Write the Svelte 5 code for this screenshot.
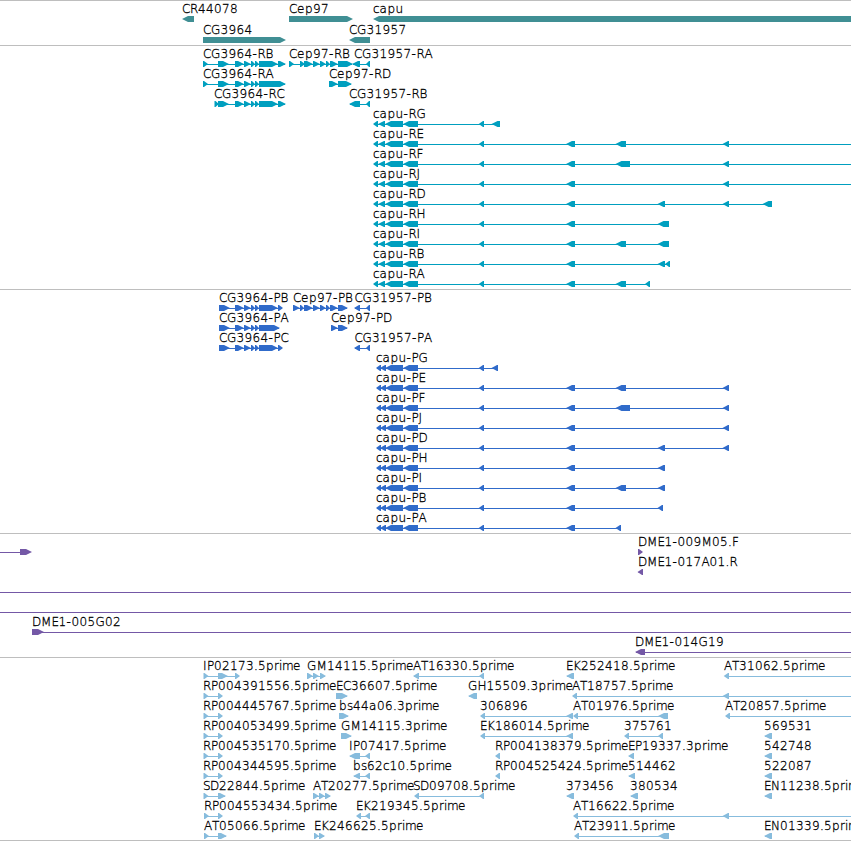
<script>
  const WIDTH = 851;

  // Horizontal advance of each label glyph, in pixels.
  const advances = {
    A: 8, B: 8, C: 8, D: 9, E: 7, F: 7, G: 9.5, H: 9, I: 4, J: 4, K: 8, M: 10.5, N: 9,
    P: 7, R: 8, S: 7, T: 7, a: 8, b: 8, c: 6.5, e: 8, i: 3, m: 11, p: 8, r: 5, s: 6,
    u: 8, '-': 5, '.': 4
  };

  function glyphXs(text, start) {
    let x = start;
    return [...text].map((ch) => {
      const at = x;
      x += advances[ch] ?? 8;
      return at;
    }).join(' ');
  }

  function arrow([a, b], dir, top) {
    const head = Math.min(6, b - a - 1);
    const mid = top + 3;
    const bottom = top + 6;
    return dir === '+'
      ? `M${a} ${top}H${b - head}L${b} ${mid}L${b - head} ${bottom}H${a}Z`
      : `M${b} ${top}H${a + head}L${a} ${mid}L${a + head} ${bottom}H${b}Z`;
  }

  // A feature: row, label, label x, strand, blocks, optional extent of its line.
  const f = (row, name, x, dir, blocks, span) => ({
    row, name, x, dir, blocks,
    span: span ?? [blocks[0][0] + 1, blocks[blocks.length - 1][1] - 1]
  });

  const cgMid = [[235, 244], [244, 251], [251, 255], [255, 259]];
  const cepMid = [[304, 313], [313, 320], [320, 326], [326, 330], [330, 338]];
  const capuR = [[373, 378], [378, 385], [385, 403], [403, 418], [478.7, 484]];
  const capuP = [[376, 381], [380, 386], [385, 403], [403, 418], [478.7, 484]];
  const x5 = [566, 575];
  const x6 = [615.5, 626];
  const x6long = [615.5, 630];
  const x7 = [657.5, 665];
  const x7long = [657.5, 669];
  const x8 = [722.5, 729];

  const genes = [
    f(0, 'CR44078', 182, '-', [[182, 194]]),
    f(0, 'Cep97', 289, '+', [[289, 353]]),
    f(0, 'capu', 373, '-', [[373, 860]]),
    f(1, 'CG3964', 203, '+', [[203, 286]]),
    f(1, 'CG31957', 349, '-', [[349, 370]])
  ];

  const capuTranscripts = [
    ['RG', [[491.5, 500]]],
    ['RE', [x5, x6, x8], WIDTH],
    ['RF', [x5, x6long, x8], WIDTH],
    ['RJ', [x5, x8], WIDTH],
    ['RD', [x5, x7, x8, [762.5, 772]]],
    ['RH', [x5, x7long]],
    ['RI', [x5, x6, x7long]],
    ['RB', [x5, x7, [665, 670]]],
    ['RA', [x5, x6, [645, 650]]]
  ].map(([n, b, end], i) =>
    f(i + 3, `capu-${n}`, 373, '-', [...capuR, ...b], end ? [374, end] : undefined));

  const transcripts = [
    f(0, 'CG3964-RB', 203, '+', [[203, 208], [218, 229], ...cgMid, [259, 278], [278, 286]]),
    f(0, 'Cep97-RB', 289, '+', [[289, 294], [300, 305], ...cepMid, [338, 353]]),
    f(0, 'CG31957-RA', 354, '-', [[352, 360], [366, 370]]),
    f(1, 'CG3964-RA', 203, '+', [[203, 208], [218, 229], ...cgMid, [259, 286]]),
    f(1, 'Cep97-RD', 329, '+', [[329, 338], [338, 352]]),
    f(2, 'CG3964-RC', 214, '+', [[214.5, 219], [218, 229], ...cgMid, [259, 278], [278, 286]]),
    f(2, 'CG31957-RB', 349, '-', [[349, 360], [366, 370]]),
    ...capuTranscripts
  ];

  const capuProteins = [
    ['PG', [[491.5, 498]]],
    ['PE', [x5, x6, x8]],
    ['PF', [x5, x6long, x8]],
    ['PJ', [x5, x8]],
    ['PD', [x5, x7, x8]],
    ['PH', [x5, x7]],
    ['PI', [x5, x6, x7]],
    ['PB', [x5, [657.5, 663]]],
    ['PA', [x5, [615.5, 621]]]
  ].map(([n, b], i) => f(i + 3, `capu-${n}`, 376, '-', [...capuP, ...b]));

  const proteins = [
    f(0, 'CG3964-PB', 219, '+', [[219, 230], ...cgMid, [259, 278], [278, 283]]),
    f(0, 'Cep97-PB', 293, '+', [[293, 300], [300, 304], ...cepMid, [338, 348]]),
    f(0, 'CG31957-PB', 354.5, '-', [[354, 360], [366, 370]]),
    f(1, 'CG3964-PA', 219, '+', [[219, 230], ...cgMid, [259, 280]]),
    f(1, 'Cep97-PD', 331, '+', [[331, 338], [338, 348]]),
    f(2, 'CG3964-PC', 219, '+', [[219, 230], ...cgMid, [259, 278], [278, 283]]),
    f(2, 'CG31957-PA', 354.5, '-', [[354, 360], [366, 370]]),
    ...capuProteins
  ];

  const clones = [
    f(0, '', 0, '+', [[20, 32]], [0, 21]),
    f(0, 'DME1-009M05.F', 638, '+', [[638, 643]]),
    f(1, 'DME1-017A01.R', 638, '-', [[637.5, 643]]),
    f(2, '', 0, '+', [], [0, WIDTH]),
    f(3, '', 0, '+', [], [0, WIDTH]),
    f(4, 'DME1-005G02', 32, '+', [[32, 44]], [33, WIDTH]),
    f(5, 'DME1-014G19', 635, '-', [[635, 645]], [636, WIDTH])
  ];

  const a1 = [203.5, 208.5];
  const a2 = [204, 209];
  const b1 = [218, 223];
  const end = [365, 370];
  const ests = [
    f(0, 'IP02173.5prime', 203, '+', [a1, [218, 228], [235, 240]]),
    f(0, 'GM14115.5prime', 307, '+', [[307, 313], [313, 319], [320, 326]]),
    f(0, 'AT16330.5prime', 413, '-', [[413, 419], [479, 484]]),
    f(0, 'EK252418.5prime', 566, '-', [[566, 574]]),
    f(0, 'AT31062.5prime', 724, '-', [[723.7, 729]], [725, WIDTH]),
    f(1, 'RP004391556.5prime', 203, '+', [a1, b1]),
    f(1, 'EC36607.5prime', 336, '+', [[336, 348]]),
    f(1, 'GH15509.3prime', 468, '-', [[468, 477]]),
    f(1, 'AT18757.5prime', 572, '-', [[572, 577], x8], [573, WIDTH]),
    f(2, 'RP004445767.5prime', 203, '+', [a1, b1]),
    f(2, 'bs44a06.3prime', 339, '+', [[339, 349]]),
    f(2, '306896', 480, '-', [[480, 485], [566, 573]]),
    f(2, 'AT01976.5prime', 573, '-', [[573, 578], [658, 668]]),
    f(2, 'AT20857.5prime', 725, '-', [[725, 730]], [726, WIDTH]),
    f(3, 'RP004053499.5prime', 203, '+', [a1, b1]),
    f(3, 'GM14115.3prime', 341, '+', [[341, 352]]),
    f(3, 'EK186014.5prime', 480, '-', [[480, 485], [566, 573]]),
    f(3, '375761', 624, '-', [[624, 629], [658, 663]]),
    f(3, '569531', 764, '-', [[764, 772]]),
    f(4, 'RP004535170.5prime', 203, '+', [a1, b1]),
    f(4, 'IP07417.5prime', 349, '-', [[349, 360], end]),
    f(4, 'RP004138379.5prime', 495, '-', [[495, 500]]),
    f(4, 'EP19337.3prime', 628, '-', [[628, 634]]),
    f(4, '542748', 764, '-', [[764, 772]]),
    f(5, 'RP004344595.5prime', 203, '+', [a1, b1]),
    f(5, 'bs62c10.5prime', 353, '-', [[353, 360], end]),
    f(5, 'RP004525424.5prime', 495, '-', [[495, 500]]),
    f(5, '514462', 628, '-', [[628, 635]]),
    f(5, '522087', 764, '-', [[764, 772]]),
    f(6, 'SD22844.5prime', 203, '+', [a1, [218, 226]]),
    f(6, 'AT20277.5prime', 313, '+', [[313, 319], [319, 325], [325, 331]]),
    f(6, 'SD09708.5prime', 413, '-', [[414, 419], [479, 484]]),
    f(6, '373456', 566, '-', [[566, 574]]),
    f(6, '380534', 630, '-', [[630, 638]]),
    f(6, 'EN11238.5prime', 764, '-', [[764, 772]]),
    f(7, 'RP004553434.5prime', 204, '+', [a2, b1]),
    f(7, 'EK219345.5prime', 356, '-', [[356, 361], end]),
    f(7, 'AT16622.5prime', 573, '-', [[573, 578], x8], [574, WIDTH]),
    f(8, 'AT05066.5prime', 204, '+', [a2, [218, 227]]),
    f(8, 'EK246625.5prime', 314, '+', [[314, 319], [319, 325]]),
    f(8, 'AT23911.5prime', 574, '-', [[574, 579], [658, 669]]),
    f(8, 'EN01339.5prime', 764, '-', [[764, 772]])
  ];

  const tracks = [
    { id: 'genes', height: 44, pitch: 21, items: genes },
    { id: 'transcripts', height: 243, pitch: 20, items: transcripts },
    { id: 'proteins', height: 243, pitch: 20, items: proteins },
    { id: 'clones', height: 123, pitch: 20, items: clones },
    { id: 'ests', height: 182, pitch: 20, items: ests }
  ];
</script>

<main class="browser">
  {#each tracks as track (track.id)}
    <section class="track {track.id}">
      <svg width={WIDTH} height={track.height} viewBox="0 0 {WIDTH} {track.height}">
        {#each track.items as item}
          {@const top = 15 + item.row * track.pitch}
          <g>
            {#if track.id !== 'genes'}
              <rect x={item.span[0]} y={top + 3} width={item.span[1] - item.span[0]} height="1" />
            {/if}
            {#each item.blocks as block}
              <path d={arrow(block, item.dir, top)} />
            {/each}
            {#if item.name}
              <text x={glyphXs(item.name, item.x)} y={top - 3}>{item.name}</text>
            {/if}
          </g>
        {/each}
      </svg>
    </section>
  {/each}
</main>

<style>
  :global(body) {
    margin: 0;
    background: #fff;
  }

  .browser {
    display: flex;
    flex-direction: column;
    width: 851px;
    overflow: hidden;
    border-bottom: 1px solid #bebebe;
  }

  .track {
    border-top: 1px solid #bebebe;
  }

  svg {
    display: block;
  }

  text {
    font-family: 'DejaVu Sans', sans-serif;
    font-size: 12px;
    font-weight: 200;
    fill: #000;
    stroke: #000;
    stroke-width: 0.3px;
  }

  .genes { fill: #408f94; }
  .transcripts { fill: #009fbf; }
  .proteins { fill: #306bca; }
  .clones { fill: #7458a6; }
  .ests { fill: #87bcdd; }
</style>
